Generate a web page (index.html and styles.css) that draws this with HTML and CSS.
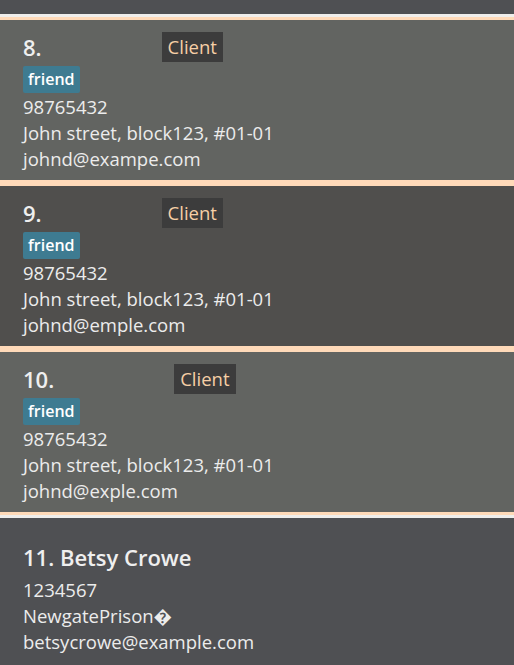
FILE: index.html
```html
<!DOCTYPE html>
<html>
<head>
<meta charset="utf-8">
<link rel="stylesheet" href="styles.css">
</head>
<body>
<div class="list">
  <div class="prev-tail"></div>
  <div class="sep"></div>
  <div class="card card-light">
    <div class="head"><span class="id">8.</span><span class="role">Client</span></div>
    <div class="tags"><span class="tag">friend</span></div>
    <div class="info">98765432</div>
    <div class="info">John street, block123, #01-01</div>
    <div class="info">johnd@exampe.com</div>
  </div>
  <div class="card card-dark">
    <div class="head"><span class="id">9.</span><span class="role">Client</span></div>
    <div class="tags"><span class="tag">friend</span></div>
    <div class="info">98765432</div>
    <div class="info">John street, block123, #01-01</div>
    <div class="info">johnd@emple.com</div>
  </div>
  <div class="card card-light">
    <div class="head"><span class="id">10.</span><span class="role">Client</span></div>
    <div class="tags"><span class="tag">friend</span></div>
    <div class="info">98765432</div>
    <div class="info">John street, block123, #01-01</div>
    <div class="info">johnd@exple.com</div>
  </div>
  <div class="sep"></div>
  <div class="card card-plain">
    <div class="head"><span class="id">11. Betsy Crowe</span></div>
    <div class="tags"></div>
    <div class="info">1234567</div>
    <div class="info">NewgatePrison&#xFFFD;</div>
    <div class="info">betsycrowe@example.com</div>
  </div>
</div>
</body>
</html>
```
FILE: styles.css
```css
html, body {
  margin: 0;
  padding: 0;
  background: #4f5053;
  overflow: hidden;
}
body {
  font-family: "Open Sans", "Noto Sans", sans-serif;
  color: #ececec;
}
.prev-tail {
  height: 14px;
  background: #4f5053;
}
.sep {
  height: 3px;
  background: #efeeec;
}
.card {
  box-sizing: border-box;
  height: 166px;
  padding: 12px 23px 0;
  border-top: 3px solid #ffdab9;
  border-bottom: 3px solid #ffdab9;
  display: flex;
  flex-direction: column;
}
.card-light { background: #626461; }
.card-dark { background: #504f4d; }
.card-plain {
  background: #4f5053;
  border: none;
  padding-top: 24px;
}
.head {
  display: flex;
  align-items: center;
  height: 30px;
}
.id {
  font-size: 22px;
  font-weight: 600;
  color: #efefef;
}
.role {
  margin-left: 120px;
  background: #3c3c3c;
  color: #f6cfa6;
  font-size: 18.5px;
  height: 30px;
  line-height: 30px;
  padding: 0 6px;
}
.tags {
  margin-top: 4px;
  display: flex;
  gap: 4px;
}
.tag {
  background: #3e7b91;
  color: #ffffff;
  font-size: 16px;
  font-weight: 600;
  height: 27px;
  line-height: 27px;
  padding: 0 5px;
  border-radius: 2px;
}
.info {
  font-size: 18.5px;
  line-height: 26px;
}
.tags + .info {
  margin-top: 1px;
}
```
